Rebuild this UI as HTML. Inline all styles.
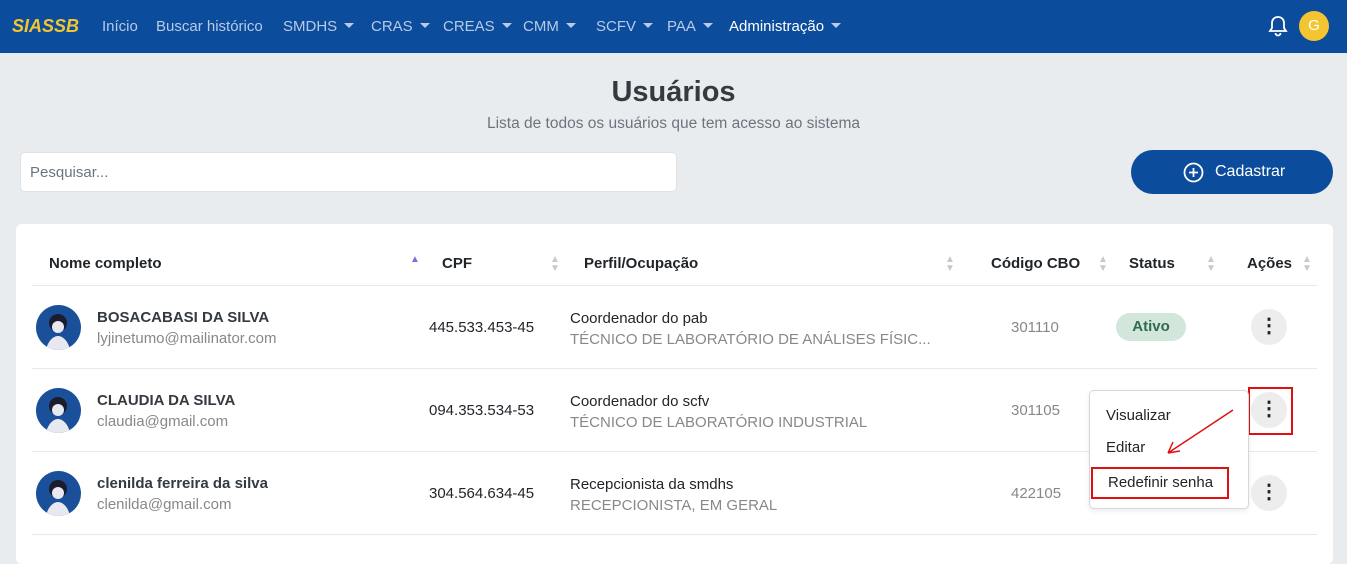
<!DOCTYPE html>
<html><head><meta charset="utf-8"><style>
*{box-sizing:border-box;margin:0;padding:0}
body{width:1347px;height:548px;overflow:hidden;background:#e9ecef;font-family:"Liberation Sans",sans-serif;position:relative;color:#212529}
.nav{position:absolute;left:0;top:0;width:1347px;height:53px;background:#0c4c9c}
.nav span{position:absolute;top:18px;font-size:15px;color:#b8cbe6}
.car:after{content:"";display:inline-block;margin-left:7px;vertical-align:3px;border-left:5px solid transparent;border-right:5px solid transparent;border-top:5px solid #b8cbe6}
.abs{position:absolute}
.card{position:absolute;left:16px;top:224px;width:1317px;height:340px;background:#fff;border-radius:6px}
.th{position:absolute;top:255px;font-weight:bold;font-size:15px}
.sort{position:absolute;top:255px;font-size:10px;color:#c5c9ce;line-height:9px}
.hr{position:absolute;left:32px;width:1285px;height:1px;background:#e6e8ea}
.av{position:absolute;left:36px;width:45px;height:45px;border-radius:50%;background:#1a4f9a;overflow:hidden}
.nm{position:absolute;left:97px;font-weight:bold;font-size:15px;color:#343a40}
.em{position:absolute;left:97px;font-size:15px;color:#888}
.t{position:absolute;font-size:15px;color:#212529}
.g{position:absolute;font-size:15px;color:#888}
.dots{position:absolute;left:1251px;width:36px;height:36px;border-radius:50%;background:#ededed;text-align:center;font-size:20px;font-weight:bold;line-height:34px;color:#222}
</style></head><body>
<div class="nav">
<span style="left:12px;top:16px;color:#f2c531;font-weight:bold;font-style:italic;font-size:18px">SIASSB</span>
<span style="left:102px">Início</span>
<span style="left:156px">Buscar histórico</span>
<span style="left:283px" class="car">SMDHS</span>
<span style="left:371px" class="car">CRAS</span>
<span style="left:443px" class="car">CREAS</span>
<span style="left:523px" class="car">CMM</span>
<span style="left:596px" class="car">SCFV</span>
<span style="left:667px" class="car">PAA</span>
<span style="left:729px;color:#fff" class="car">Administração</span>
<svg class="abs" style="left:1268px;top:15px" width="20" height="22" viewBox="0 0 20 22"><path d="M10 2c-4 0-6 3-6 6v5l-2 3h16l-2-3V8c0-3-2-6-6-6zM7.5 18a2.5 2.5 0 0 0 5 0" fill="none" stroke="#fff" stroke-width="1.8"/></svg>
<div class="abs" style="left:1299px;top:11px;width:30px;height:30px;border-radius:50%;background:#f2c531;color:#fff;text-align:center;line-height:30px;font-size:15px">G</div>
</div>
<div class="abs" style="left:0;width:1347px;top:76px;text-align:center;font-size:29px;font-weight:bold;color:#343a40">Usuários</div>
<div class="abs" style="left:0;width:1347px;top:115px;text-align:center;font-size:15.5px;color:#6c757d">Lista de todos os usuários que tem acesso ao sistema</div>
<div class="abs" style="left:20px;top:152px;width:657px;height:40px;background:#fff;border:1px solid #dee2e6;border-radius:5px;padding:11px 9px;font-size:15px;color:#6c757d">Pesquisar...</div>
<div class="abs" style="left:1131px;top:150px;width:202px;height:44px;background:#0c4c9c;border-radius:22px;color:#fff;font-size:16px;line-height:44px;padding-left:84px">Cadastrar</div>
<svg class="abs" style="left:1183px;top:162px" width="21" height="21" viewBox="0 0 21 21"><circle cx="10.5" cy="10.5" r="9" fill="none" stroke="#fff" stroke-width="1.8"/><path d="M10.5 6v9M6 10.5h9" stroke="#fff" stroke-width="1.8"/></svg>
<div class="card"></div>
<div class="th" style="left:49px">Nome completo</div><div class="sort" style="left:410px;color:#7d6fd9">▲</div>
<div class="th" style="left:442px">CPF</div><div class="sort" style="left:550px">▲<br>▼</div>
<div class="th" style="left:584px">Perfil/Ocupação</div><div class="sort" style="left:945px">▲<br>▼</div>
<div class="th" style="left:991px">Código CBO</div><div class="sort" style="left:1098px">▲<br>▼</div>
<div class="th" style="left:1129px">Status</div><div class="sort" style="left:1206px">▲<br>▼</div>
<div class="th" style="left:1247px">Ações</div><div class="sort" style="left:1302px">▲<br>▼</div>
<div class="hr" style="top:285px"></div>
<div class="hr" style="top:368px"></div>
<div class="hr" style="top:451px"></div>
<div class="hr" style="top:534px"></div>

<div class="av" style="top:305px"><svg width="45" height="45"><circle cx="22" cy="18" r="9" fill="#1b1d2e"/><path d="M10 45c2-10 8-14 12-14s10 4 12 14z" fill="#e8e8f0"/><circle cx="22" cy="22" r="6" fill="#e8e8f0"/></svg></div>
<div class="nm" style="top:309px">BOSACABASI DA SILVA</div><div class="em" style="top:330px">lyjinetumo@mailinator.com</div>
<div class="t" style="left:429px;top:319px">445.533.453-45</div>
<div class="t" style="left:570px;top:310px">Coordenador do pab</div><div class="g" style="left:570px;top:331px">TÉCNICO DE LABORATÓRIO DE ANÁLISES FÍSIC...</div>
<div class="g" style="left:1011px;top:319px">301110</div>
<div class="abs" style="left:1116px;top:313px;width:70px;height:28px;border-radius:14px;background:#d2e6dc;color:#2f6b4c;font-weight:bold;font-size:15px;text-align:center;line-height:28px">Ativo</div>
<div class="dots" style="top:309px">⋮</div>

<div class="av" style="top:388px"><svg width="45" height="45"><circle cx="22" cy="18" r="9" fill="#1b1d2e"/><path d="M10 45c2-10 8-14 12-14s10 4 12 14z" fill="#e8e8f0"/><circle cx="22" cy="22" r="6" fill="#e8e8f0"/></svg></div>
<div class="nm" style="top:392px">CLAUDIA DA SILVA</div><div class="em" style="top:413px">claudia@gmail.com</div>
<div class="t" style="left:429px;top:402px">094.353.534-53</div>
<div class="t" style="left:570px;top:393px">Coordenador do scfv</div><div class="g" style="left:570px;top:414px">TÉCNICO DE LABORATÓRIO INDUSTRIAL</div>
<div class="g" style="left:1011px;top:402px">301105</div>
<div class="dots" style="top:392px">⋮</div>
<div class="abs" style="left:1248px;top:387px;width:45px;height:48px;border:2px solid #e01010"></div>

<div class="av" style="top:471px"><svg width="45" height="45"><circle cx="22" cy="18" r="9" fill="#1b1d2e"/><path d="M10 45c2-10 8-14 12-14s10 4 12 14z" fill="#e8e8f0"/><circle cx="22" cy="22" r="6" fill="#e8e8f0"/></svg></div>
<div class="nm" style="top:475px">clenilda ferreira da silva</div><div class="em" style="top:496px">clenilda@gmail.com</div>
<div class="t" style="left:429px;top:485px">304.564.634-45</div>
<div class="t" style="left:570px;top:476px">Recepcionista da smdhs</div><div class="g" style="left:570px;top:497px">RECEPCIONISTA, EM GERAL</div>
<div class="g" style="left:1011px;top:485px">422105</div>
<div class="dots" style="top:475px">⋮</div>

<div class="abs" style="left:1089px;top:390px;width:160px;height:119px;background:#fff;border:1px solid #d5d8db;border-radius:5px;box-shadow:0 2px 6px rgba(0,0,0,.08)"></div>
<div class="t" style="left:1106px;top:407px">Visualizar</div>
<div class="t" style="left:1106px;top:439px">Editar</div>
<div class="abs" style="left:1091px;top:467px;width:138px;height:32px;border:2px solid #e01010"></div>
<div class="t" style="left:1108px;top:474px">Redefinir senha</div>
<svg class="abs" style="left:1160px;top:408px" width="80" height="50"><path d="M73 2L8 45M8 45l12-2M8 45l5-11" stroke="#e01010" stroke-width="1.5" fill="none"/></svg>
</body></html>
